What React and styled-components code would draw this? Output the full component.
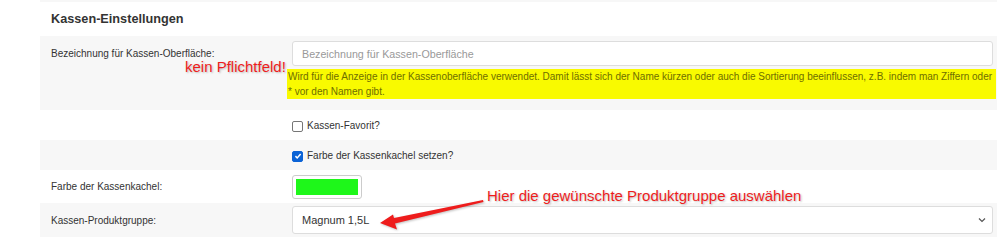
import React from 'react';
import styled, { createGlobalStyle } from 'styled-components';

const GlobalStyle = createGlobalStyle`
    body {
        margin: 0;
        background: #fff;
        font-family: "Liberation Sans", Arial, sans-serif;
        color: #333;
    }
`;

const Page = styled.div`
    padding-left: 40px;
    width: 957px;
    height: 245px;
    overflow: hidden;
`;

const Panel = styled.div`
    position: relative;
    border-top: 2px solid #f7f7f7;
`;

const Title = styled.h3`
    margin: 0;
    padding: 10px 11px 0;
    height: 24px;
    font-size: 12.7px;
    font-weight: bold;
    color: #333;
`;

const Row = styled.div`
    display: grid;
    grid-template-columns: 241px 1fr;
    align-items: ${p => (p.$top ? 'start' : 'center')};
    padding: ${p => p.$pad || '0'} 1px 0 11px;
    height: ${p => p.$h}px;
    box-sizing: border-box;
    background: ${p => (p.$grey ? '#f7f7f7' : '#fff')};
`;

const Label = styled.label`
    font-size: 10px;
    color: #333;
    padding-top: ${p => p.$offset || 0}px;
`;

const Field = styled.div`
    display: flex;
    flex-direction: column;
    gap: 3px;
    min-width: 0;
`;

const TextInput = styled.input`
    box-sizing: border-box;
    width: calc(100% - 3px);
    height: 25px;
    border: 1px solid #ddd;
    border-radius: 3px;
    padding: 0 9px;
    font-family: inherit;
    font-size: 10.7px;
    color: #333;
    background: #fff;
    &::placeholder {
        color: #999;
    }
`;

const Help = styled.div`
    margin-left: -5px;
    background: #f9fa00;
    color: #6e6e00;
    font-size: 10px;
    line-height: 15px;
    padding: 0 1px;
    height: 30px;
`;

const CheckLine = styled.label`
    display: flex;
    align-items: center;
    gap: 4px;
    font-size: 10px;
    color: #333;
`;

const Box = styled.span`
    box-sizing: border-box;
    width: 11px;
    height: 11px;
    margin-top: 2px;
    border-radius: 2px;
    border: 1px solid ${p => (p.$checked ? '#0b63d6' : '#767676')};
    background: ${p => (p.$checked ? '#0b63d6' : '#fff')};
    display: inline-flex;
    align-items: center;
    justify-content: center;
`;

const Swatch = styled.div`
    box-sizing: border-box;
    width: 70px;
    height: 24px;
    border: 1px solid #ccc;
    border-radius: 3px;
    padding: 3px;
    background: #fff;
    &::after {
        content: '';
        display: block;
        height: 100%;
        background: ${p => p.$color};
    }
`;

const Select = styled.div`
    box-sizing: border-box;
    width: calc(100% - 3px);
    height: 28px;
    border: 1px solid #ddd;
    border-radius: 3px;
    background: #fff;
    display: flex;
    align-items: center;
    justify-content: space-between;
    padding: 0 6px 0 9px;
    font-size: 11px;
    color: #333;
`;

const Note = styled.div`
    position: absolute;
    color: #ee1c1c;
    font-size: 15px;
    white-space: nowrap;
    text-shadow: 1px 1px 2px rgba(0, 0, 0, 0.25);
    left: ${p => p.$x}px;
    top: ${p => p.$y}px;
`;

const Arrow = styled.svg`
    position: absolute;
    left: 260px;
    top: 188px;
    overflow: visible;
    filter: drop-shadow(1px 1px 1px rgba(0, 0, 0, 0.25));
`;

const Chevron = () => (
    <svg width="8" height="6" viewBox="0 0 8 6">
        <path d="M1 1.5 L4 4.5 L7 1.5" fill="none" stroke="#555" strokeWidth="1.2" />
    </svg>
);

const Tick = () => (
    <svg width="8" height="8" viewBox="0 0 10 10">
        <path d="M1.8 5.2 L4 7.4 L8.3 2.6" fill="none" stroke="#fff" strokeWidth="1.9" />
    </svg>
);

export default function App() {
    return (
        <Page>
            <GlobalStyle />
            <Panel>
                <Title>Kassen-Einstellungen</Title>
                <Row $grey $top $h={74} $pad="5px">
                    <Label $offset={7}>Bezeichnung für Kassen-Oberfläche:</Label>
                    <Field>
                        <TextInput placeholder="Bezeichnung für Kassen-Oberfläche" />
                        <Help>
                            Wird für die Anzeige in der Kassenoberfläche verwendet. Damit lässt sich der Name kürzen oder auch die Sortierung beeinflussen, z.B. indem man Ziffern oder * vor den Namen gibt.
                        </Help>
                    </Field>
                </Row>
                <Row $h={30}>
                    <span />
                    <CheckLine><Box />Kassen-Favorit?</CheckLine>
                </Row>
                <Row $grey $h={30}>
                    <span />
                    <CheckLine><Box $checked><Tick /></Box>Farbe der Kassenkachel setzen?</CheckLine>
                </Row>
                <Row $h={33}>
                    <Label>Farbe der Kassenkachel:</Label>
                    <Swatch $color="#1ef71a" />
                </Row>
                <Row $grey $h={34}>
                    <Label>Kassen-Produktgruppe:</Label>
                    <Select>
                        <span>Magnum 1,5L</span>
                        <Chevron />
                    </Select>
                </Row>

                <Note $x={145} $y={56}>kein Pflichtfeld!</Note>
                <Note $x={447} $y={185}>Hier die gewünschte Produktgruppe auswählen</Note>
                <Arrow width="190" height="40">
                    <path d="M183 10 L94 28 L93 24.5 L80 33 L97 39.5 L95 33.5 L183.5 12 Z" fill="#ee1c1c" />
                </Arrow>
            </Panel>
        </Page>
    );
}
